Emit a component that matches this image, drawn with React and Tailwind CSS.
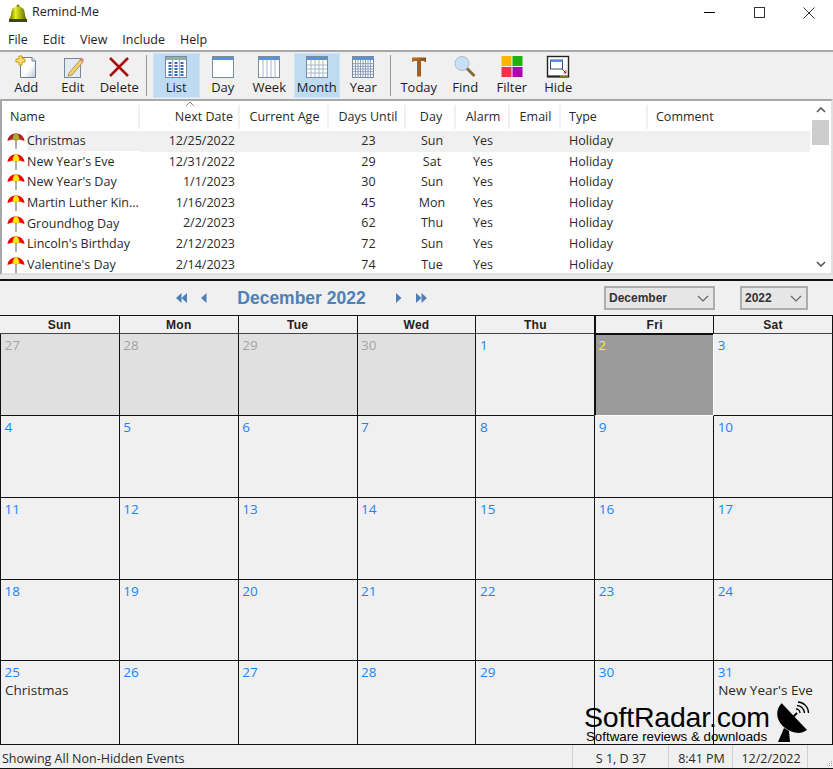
const font = { fontFamily: '"Open Sans", "Noto Sans", sans-serif' }

const events = [
  ['Christmas', '12/25/2022', '23', 'Sun'],
  ["New Year's Eve", '12/31/2022', '29', 'Sat'],
  ["New Year's Day", '1/1/2023', '30', 'Sun'],
  ['Martin Luther Kin...', '1/16/2023', '45', 'Mon'],
  ['Groundhog Day', '2/2/2023', '62', 'Thu'],
  ["Lincoln's Birthday", '2/12/2023', '72', 'Sun'],
  ["Valentine's Day", '2/14/2023', '74', 'Tue'],
]

const weeks = [
  [27, 28, 29, 30, 1, 2, 3],
  [4, 5, 6, 7, 8, 9, 10],
  [11, 12, 13, 14, 15, 16, 17],
  [18, 19, 20, 21, 22, 23, 24],
  [25, 26, 27, 28, 29, 30, 31],
]

function Umbrella({ dark }) {
  const a = dark ? '#b0202c' : '#f00000'
  const b = dark ? '#a8b020' : '#ffe800'
  return (
    <svg width="18" height="18" viewBox="0 0 18 18" className="shrink-0">
      <path d="M9 8v9" stroke="#9a9a9a" strokeWidth="1.6" />
      <path d="M0.500 9C1 4 4.500 1.500 9 1.500S17 4 17.500 9L13 7.500 9 8.500 5 7.500Z" fill={a} />
      <path d="M5.500 7.600C5.800 4 7.200 1.500 9 1.500S12.200 4 12.500 7.600L9 8.500Z" fill={b} />
    </svg>
  )
}

function Bell() {
  return (
    <svg width="20" height="20" viewBox="0 0 20 20">
      <defs>
        <linearGradient id="bell" x1="0" y1="0" x2="1" y2="0">
          <stop offset="0" stopColor="#5c6400" />
          <stop offset="0.35" stopColor="#e8ee20" />
          <stop offset="1" stopColor="#5c6400" />
        </linearGradient>
      </defs>
      <circle cx="10" cy="3" r="1.500" fill="#6a7000" />
      <path d="M1.500 16C3 14 3 11 3.500 8.500C4 5.500 6.500 3.500 10 3.500S16 5.500 16.500 8.500C17 11 17 14 18.500 16Z" fill="url(#bell)" />
      <rect x="1" y="16" width="18" height="3" fill="#3c4a00" />
    </svg>
  )
}

function ViewIcon({ cols = 0, rows = 0, line = '#93a3b8', list }) {
  const xs = Array.from({ length: cols }, (_, i) => 2 + ((i + 1) * 20) / (cols + 1))
  const ys = Array.from({ length: rows }, (_, i) => 6 + ((i + 1) * 16) / (rows + 1))
  return (
    <svg width="24" height="24" viewBox="0 0 24 24">
      <rect x="1.500" y="1.500" width="21" height="21" fill="#fff" stroke="#7d8a99" />
      <rect x="2" y="2" width="20" height="3" fill={list ? '#8fb0a8' : '#5c8fe0'} />
      {xs.map((x) => (
        <path key={x} d={`M${x} 5V22`} stroke={line} />
      ))}
      {ys.map((y) => (
        <path key={y} d={`M2 ${y}H22`} stroke={line} />
      ))}
      {list &&
        [4, 10, 16].map((x) => (
          <path key={x} d={`M${x + 2} 7V21`} stroke="#3468c0" strokeWidth="3" strokeDasharray="2 1" />
        ))}
    </svg>
  )
}

const icons = {
  add: (
    <svg width="24" height="24" viewBox="0 0 24 24">
      <defs>
        <linearGradient id="page" x1="0" y1="0" x2="1" y2="1">
          <stop offset="0.55" stopColor="#ffffff" />
          <stop offset="1" stopColor="#b8c6de" />
        </linearGradient>
      </defs>
      <path d="M6.500 2.500H18L21.500 6V22.500H6.500Z" fill="url(#page)" stroke="#6e7f92" />
      <path d="M18 2.500V6H21.500" fill="#dfe8f2" stroke="#6e7f92" />
      <path d="M5 1H8V4H11V7H8V10H5V7H2V4H5Z" fill="#ffe27a" stroke="#c99a10" />
    </svg>
  ),
  edit: (
    <svg width="24" height="24" viewBox="0 0 24 24">
      <rect x="3.500" y="3.500" width="16" height="19" fill="#e4eaf2" stroke="#7a8796" />
      <path d="M8 18L19 5L22 7L11 20L7 21Z" fill="#f0cf6a" stroke="#a88b3a" strokeWidth="0.800" />
      <path d="M19 5L20.500 2.500L23 4.500L22 7Z" fill="#e08a8a" />
    </svg>
  ),
  del: (
    <svg width="24" height="24" viewBox="0 0 24 24">
      <path d="M3 3L21 21M21 3L3 21" stroke="#a80f0f" strokeWidth="2.500" />
    </svg>
  ),
  today: (
    <svg width="24" height="24" viewBox="0 0 24 24">
      <defs>
        <linearGradient id="tee" x1="0" y1="0" x2="1" y2="0">
          <stop offset="0" stopColor="#b87028" />
          <stop offset="1" stopColor="#8a4f14" />
        </linearGradient>
      </defs>
      <path d="M5 2.500H19V7H18L17 6H14V21.500H10V6H7L6 7H5Z" fill="url(#tee)" />
    </svg>
  ),
  find: (
    <svg width="24" height="24" viewBox="0 0 24 24">
      <circle cx="9" cy="8.500" r="7" fill="#c8e0f6" stroke="#a9bccd" />
      <path d="M14 13.500L21.500 21" stroke="#8a6a32" strokeWidth="3" />
    </svg>
  ),
  filter: (
    <svg width="24" height="24" viewBox="0 0 24 24">
      <rect x="1.500" y="1" width="10" height="10" fill="#ffb400" />
      <rect x="12.500" y="1" width="10" height="10" fill="#20b010" />
      <rect x="1.500" y="12" width="10" height="10" fill="#f53048" />
      <rect x="12.500" y="12" width="10" height="10" fill="#a808b0" />
    </svg>
  ),
  hide: (
    <svg width="24" height="24" viewBox="0 0 24 24">
      <rect x="1.500" y="1.500" width="21" height="20" fill="#fff" stroke="#222" strokeWidth="1.400" />
      <rect x="4.500" y="5" width="12" height="9" fill="#fff" stroke="#33507a" />
      <rect x="4.500" y="5" width="12" height="2" fill="#5c8fe0" />
      <path d="M16 14L20 18M20 15.500V18H17.500" stroke="#c01818" fill="none" />
      <rect x="1" y="20.500" width="22" height="2" fill="#222" />
      <rect x="14" y="20.500" width="8" height="1" fill="#b8d020" />
    </svg>
  ),
}

function ToolButton({ icon, label, active }) {
  return (
    <div
      className={`w-[46.5px] h-[45px] flex flex-col items-center border ${
        active ? 'bg-[#bfdbf3] border-[#cde4f7]' : 'border-transparent'
      }`}
    >
      <div className="h-[24px] mt-[1px]">{icon}</div>
      <div className="text-[13px] leading-[18px] -mt-[1px] text-[#1c1c1c]">{label}</div>
    </div>
  )
}

function Divider() {
  return <div className="w-px h-[41px] bg-[#9a9a9a] mx-[3px] self-center" />
}

const listCols = 'grid grid-cols-[138px_100px_89px_77px_50px_54px_51px_87px_162px]'

function EventList() {
  return (
    <div className="h-[176px] border-2 border-[#a8a8a8] border-b-[#e0e0e0] border-r-[#e0e0e0] bg-white flex">
      <div className="w-[808px] flex flex-col overflow-hidden">
        <div className={`${listCols} relative h-[30px] shrink-0 pt-[4px] pb-[2px] text-[12.500px] leading-[24px] text-[#2a2a2a]`}>
          <div className="pl-[8px] border-r-2 border-[#f0f0f0]">Name</div>
          <div className="pr-[5px] text-right border-r-2 border-[#f0f0f0]">Next Date</div>
          <div className="pl-[2px] text-center border-r-2 border-[#f0f0f0]">Current Age</div>
          <div className="pl-[3px] text-center border-r-2 border-[#f0f0f0]">Days Until</div>
          <div className="pl-[2px] text-center border-r-2 border-[#f0f0f0]">Day</div>
          <div className="pl-[2px] text-center border-r-2 border-[#f0f0f0]">Alarm</div>
          <div className="pl-[2px] text-center border-r-2 border-[#f0f0f0]">Email</div>
          <div className="pl-[8px] border-r-2 border-[#f0f0f0]">Type</div>
          <div className="pl-[8px]">Comment</div>
          <svg width="10" height="5" viewBox="0 0 10 5" className="absolute left-[183px] top-0">
            <path d="M1 5L5 1L9 5" fill="none" stroke="#888" />
          </svg>
        </div>
        {events.map((e, i) => (
          <div key={e[0]} className={`${listCols} h-[20.600px] shrink-0 text-[12.500px] leading-[20px] text-[#2a2a2a]`}>
            <div className="flex items-center pl-[5px] gap-[2px]">
              <Umbrella dark={i === 0} />
              <span className={`flex-1 whitespace-nowrap ${i === 0 ? 'bg-[#f0f0f0]' : ''}`}>{e[0]}</span>
            </div>
            {[
              [e[1], 'text-right pr-[5px]'],
              ['', ''],
              [e[2], 'text-center pl-[2px]'],
              [e[3], 'text-center pl-[2px]'],
              ['Yes', 'text-center'],
              ['', ''],
              ['Holiday', 'pl-[8px]'],
              ['', ''],
            ].map(([t, c], j) => (
              <div key={j} className={`${c} ${i === 0 ? 'bg-[#f0f0f0]' : ''}`}>
                {t}
              </div>
            ))}
          </div>
        ))}
      </div>
      <div className="w-[21px] bg-white flex flex-col items-center">
        <div className="h-[18px] flex items-center">
          <svg width="10" height="6" viewBox="0 0 10 6">
            <path d="M1 5L5 1L9 5" fill="none" stroke="#555" strokeWidth="1.600" />
          </svg>
        </div>
        <div className="w-[17px] h-[25px] bg-[#cdcdcd] mt-[1px]" />
        <div className="flex-1" />
        <div className="h-[18px] flex items-center">
          <svg width="10" height="6" viewBox="0 0 10 6">
            <path d="M1 1L5 5L9 1" fill="none" stroke="#555" strokeWidth="1.600" />
          </svg>
        </div>
      </div>
    </div>
  )
}

function Arrow({ double, right }) {
  const tri = right ? 'M0 0L5.500 5L0 10Z' : 'M5.500 0L0 5L5.500 10Z'
  return (
    <svg width={double ? 11 : 6} height="10" viewBox={double ? '0 0 11 10' : '0 0 6 10'}>
      <path d={tri} fill="#4f7fb5" />
      {double && <path d={tri} fill="#4f7fb5" transform="translate(5.500 0)" />}
    </svg>
  )
}

function Select({ value, className }) {
  return (
    <div
      className={`h-[24px] border-2 border-[#adadad] bg-[#e6e6e6] flex items-center justify-between pl-[3px] pr-[4px] text-[12px] font-bold text-[#333] ${className}`}
      style={{ fontFamily: '"Liberation Sans", sans-serif' }}
    >
      {value}
      <svg width="12" height="7" viewBox="0 0 12 7">
        <path d="M1 1L6 6L11 1" fill="none" stroke="#666" strokeWidth="1.200" />
      </svg>
    </div>
  )
}

function DayCell({ day, muted, today, note, afterToday }) {
  return (
    <div
      className={`text-[13.500px] leading-[20px] border-b ${
        today
          ? 'bg-[#9b9b9b] text-[#f8f400] border-l-2 border-t-2 border-l-[#111] border-t-[#111] border-b-white pl-[2px] -mt-px'
          : `border-l border-b-[#111] pl-[3.500px] pt-[1px] ${muted ? 'bg-[#e0e0e0] text-[#a5a5a5]' : 'text-[#1a82ff]'} ${
              afterToday ? 'border-l-white' : 'border-l-[#111]'
            }`
      }`}
    >
      {day}
      {note && <div className="text-[13.500px] leading-[17px] pl-[0.500px] text-[#2a2a2a]">{note}</div>}
    </div>
  )
}

function Calendar() {
  return (
    <div className="border-t-2 border-[#111] bg-[#f0f0f0] h-[466px] flex flex-col">
      <div className="h-[35px] flex items-center shrink-0 border-b border-[#111]">
        <div className="w-[604px] flex items-center pl-[176px]">
          <Arrow double />
          <div className="w-[14px]" />
          <Arrow />
          <div
            className="w-[189px] text-center text-[17.500px] font-bold text-[#4f7fb5]"
            style={{ fontFamily: '"Liberation Sans", sans-serif' }}
          >
            December 2022
          </div>
          <Arrow right />
          <div className="w-[14px]" />
          <Arrow double right />
        </div>
        <Select value="December" className="w-[111px]" />
        <Select value="2022" className="w-[68px] ml-[25px]" />
      </div>
      <div
        className="grid grid-cols-7 h-[18px] shrink-0 border-b border-r border-b-[#444] border-r-[#111] text-[12px] font-bold leading-[18px] text-center text-[#222]"
        style={{ fontFamily: '"Liberation Sans", sans-serif', letterSpacing: '0.300px' }}
      >
        {['Sun', 'Mon', 'Tue', 'Wed', 'Thu', 'Fri', 'Sat'].map((d, i) => (
          <div key={d} className={`${i > 0 ? 'border-l' : ''} ${i === 5 ? 'border-l-2' : ''} border-[#111]`}>
            {d}
          </div>
        ))}
      </div>
      <div className="flex-1 grid grid-cols-7 grid-rows-[81.500px_82px_82px_81.500px_84px] border-r border-[#111]">
        {weeks.map((w, r) =>
          w.map((d, c) => (
            <DayCell
              key={`${r}-${c}`}
              day={d}
              muted={r === 0 && c < 4}
              today={r === 0 && c === 5}
              afterToday={r === 0 && c === 6}
              note={r === 4 && c === 0 ? 'Christmas' : r === 4 && c === 6 ? "New Year's Eve" : null}
            />
          )),
        )}
      </div>
    </div>
  )
}

function StatusBar() {
  return (
    <div className="relative h-[24px] bg-[#f0f0f0] border-b border-[#111] flex text-[12.500px] leading-[27px] text-[#2a2a2a]">
      <div className="w-[573px] pl-[2px] border-r border-[#d0d0d0]">Showing All Non-Hidden Events</div>
      <div className="w-[96px] pl-[1px] text-center border-r border-[#d0d0d0]">S 1, D 37</div>
      <div className="w-[64px] pl-[2px] text-center border-r border-[#d0d0d0]">8:41 PM</div>
      <div className="w-[75px] pl-[2px] text-center border-r border-[#d0d0d0]">12/2/2022</div>
      <svg width="8" height="8" viewBox="0 0 8 8" className="absolute right-0 bottom-0">
        <path d="M6 1h1v1H6zM4 3h1v1H4zM6 3h1v1H6zM2 5h1v1H2zM4 5h1v1H4zM6 5h1v1H6z" fill="#a0a0a0" />
      </svg>
    </div>
  )
}

function Watermark() {
  return (
    <div
      className="absolute left-[584px] top-[702px] w-[249px] text-black"
      style={{ fontFamily: '"Liberation Sans", sans-serif' }}
    >
      <div className="text-[28.500px] leading-[30px] tracking-[-0.200px]">SoftRadar.com</div>
      <div className="text-[13.300px] leading-[14px] -mt-[2px] ml-[2px]">Software reviews &amp; downloads</div>
      <svg width="42" height="50" viewBox="0 0 42 50" className="absolute left-[186px] -top-[7px]">
        <path d="M11.700 8.300L37 35C30 40 22 38 15 33C7 27 4 16 11.700 8.300Z" fill="#000" />
        <path d="M14 33L8 47H20L19 36Z" fill="#000" />
        <path d="M23 22L27 18" stroke="#000" strokeWidth="2" />
        <path d="M26 14A4 4 0 0 1 30 18M27 10.500A8 8 0 0 1 34.500 18M28 7A11 11 0 0 1 38.500 18" fill="none" stroke="#000" strokeWidth="1.300" />
      </svg>
    </div>
  )
}

export default function App() {
  return (
    <div className="relative w-[833px] h-[769px] bg-white overflow-hidden" style={font}>
      <div className="h-[25px] flex items-center">
        <div className="ml-[8px] mr-[4px]">
          <Bell />
        </div>
        <div className="text-[12.500px] text-[#222]">Remind-Me</div>
        <div className="flex-1" />
        <div className="w-[50px] flex justify-center">
          <div className="w-[11px] h-px bg-black" />
        </div>
        <div className="w-[50px] flex justify-center">
          <div className="w-[11px] h-[11px] border border-[#333]" />
        </div>
        <div className="w-[50px] -mr-[1px] flex justify-center">
          <svg width="12" height="12" viewBox="0 0 12 12">
            <path d="M0.500 0.500L11.500 11.500M11.500 0.500L0.500 11.500" stroke="#333" />
          </svg>
        </div>
      </div>
      <div className="h-[25px] flex items-center pt-[5px] pl-[8px] gap-[15px] text-[12.500px] text-[#222]">
        {['File', 'Edit', 'View', 'Include', 'Help'].map((m) => (
          <span key={m}>{m}</span>
        ))}
      </div>
      <div className="h-[49px] border-t-2 border-[#a8a8a8] bg-[#f0f0f0] flex items-center pl-[3px]">
        <ToolButton icon={icons.add} label="Add" />
        <ToolButton icon={icons.edit} label="Edit" />
        <ToolButton icon={icons.del} label="Delete" />
        <Divider />
        <div className="w-[3.500px]" />
        <ToolButton icon={<ViewIcon list cols={2} />} label="List" active />
        <ToolButton icon={<ViewIcon />} label="Day" />
        <ToolButton icon={<ViewIcon cols={4} line="#a8b4d8" />} label="Week" />
        <div className="w-px" />
        <ToolButton icon={<ViewIcon cols={4} rows={3} line="#a8b8cc" />} label="Month" active />
        <ToolButton icon={<ViewIcon cols={7} rows={5} line="#8d9fc0" />} label="Year" />
        <Divider />
        <div className="w-[2px]" />
        <ToolButton icon={icons.today} label="Today" />
        <ToolButton icon={icons.find} label="Find" />
        <ToolButton icon={icons.filter} label="Filter" />
        <ToolButton icon={icons.hide} label="Hide" />
      </div>
      <EventList />
      <div className="h-[4px] bg-[#e8e8e8]" />
      <Calendar />
      <StatusBar />
      <Watermark />
    </div>
  )
}
